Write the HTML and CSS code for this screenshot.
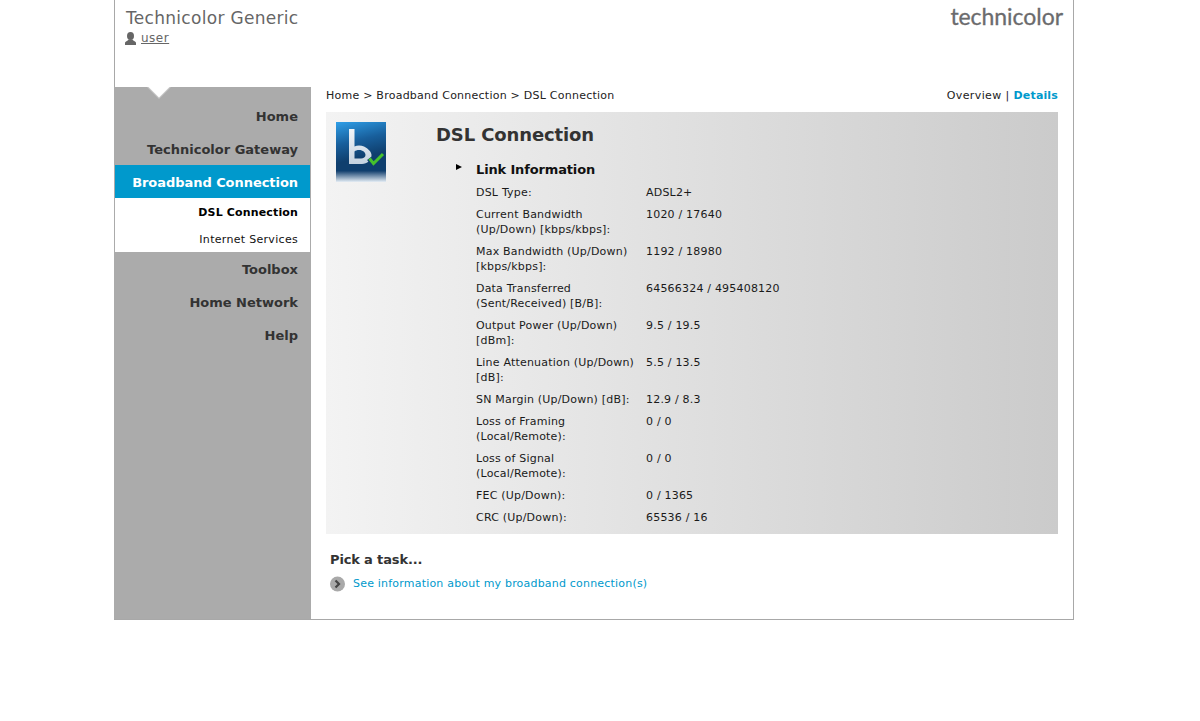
FILE: index.html
```html
<!DOCTYPE html>
<html lang="en">
<head>
<meta charset="utf-8">
<title>DSL Connection</title>
<link rel="stylesheet" href="styles.css">
</head>
<body>
<div class="page">
  <header class="header">
    <div class="identity">
      <div class="product">Technicolor Generic</div>
      <div class="user">
        <svg class="user-icon" width="11" height="13" viewBox="0 0 11 13"><ellipse cx="5.500" cy="4" rx="3.500" ry="4" fill="#666"/><path d="M0 13V10.800C0 9.500 2.500 8.800 3.800 7.500H7.200C8.500 8.800 11 9.500 11 10.800V13Z" fill="#666"/></svg>
        <a class="user-link" href="#">user</a>
      </div>
    </div>
    <div class="logo">technicolor</div>
  </header>
  <div class="main">
    <nav class="sidebar">
      <div class="notch">
        <svg width="24" height="12" viewBox="0 0 24 12"><path d="M0 0H24L12 12Z" fill="#c6c6c6"/><path d="M1.500 0H22.500L12 10.500Z" fill="#fff"/></svg>
      </div>
      <a class="nav-item" href="#">Home</a>
      <a class="nav-item" href="#">Technicolor Gateway</a>
      <a class="nav-item active" href="#">Broadband Connection</a>
      <div class="subnav">
        <a class="sub-item current" href="#">DSL Connection</a>
        <a class="sub-item" href="#">Internet Services</a>
      </div>
      <a class="nav-item" href="#">Toolbox</a>
      <a class="nav-item" href="#">Home Network</a>
      <a class="nav-item" href="#">Help</a>
    </nav>
    <main class="content">
      <div class="crumbs">
        <div>Home &gt; Broadband Connection &gt; DSL Connection</div>
        <div class="views">Overview | <a class="details" href="#">Details</a></div>
      </div>
      <section class="panel">
        <svg class="panel-icon" width="50" height="60" viewBox="0 0 50 60">
          <defs>
            <linearGradient id="bg" x1="0" y1="0" x2="0.25" y2="1">
              <stop offset="0" stop-color="#2f9fe8"/>
              <stop offset="0.45" stop-color="#185f9c"/>
              <stop offset="0.8" stop-color="#0f3f6e"/>
            </linearGradient>
            <linearGradient id="fade" x1="0" y1="0" x2="0" y2="1">
              <stop offset="0" stop-color="#14416f"/>
              <stop offset="1" stop-color="#e4edf5"/>
            </linearGradient>
            <linearGradient id="letter" x1="0" y1="0" x2="0" y2="1">
              <stop offset="0" stop-color="#f2f5f8"/>
              <stop offset="1" stop-color="#c4d2e0"/>
            </linearGradient>
          </defs>
          <rect width="50" height="49" fill="url(#bg)"/>
          <rect y="49" width="50" height="11" fill="url(#fade)"/>
          <path fill-rule="evenodd" d="M13 7H18.500V24.500C21 23 25 23 28 24.500C33 27 35.500 30.500 35.500 33C35.500 38 31 42 26 42H13ZM18.500 36.500H25C27.500 36.500 29.500 35 29.500 33C29.500 30.500 27 28 23 28C21 28 19.500 28.500 18.500 29.500Z" fill="url(#letter)"/>
          <path d="M33 36.500L37.500 42L47.500 32" fill="none" stroke="#0f3f6e" stroke-width="5"/>
          <path d="M33.500 36.500L37.500 41.500L47 32" fill="none" stroke="#46c22c" stroke-width="3"/>
        </svg>
        <div class="panel-body">
          <h1 class="title">DSL Connection</h1>
          <h2 class="subtitle">Link Information</h2>
          <dl class="info">
            <dt>DSL Type:</dt><dd>ADSL2+</dd>
            <dt>Current Bandwidth<br>(Up/Down) [kbps/kbps]:</dt><dd>1020 / 17640</dd>
            <dt>Max Bandwidth (Up/Down)<br>[kbps/kbps]:</dt><dd>1192 / 18980</dd>
            <dt>Data Transferred<br>(Sent/Received) [B/B]:</dt><dd>64566324 / 495408120</dd>
            <dt>Output Power (Up/Down)<br>[dBm]:</dt><dd>9.5 / 19.5</dd>
            <dt>Line Attenuation (Up/Down)<br>[dB]:</dt><dd>5.5 / 13.5</dd>
            <dt>SN Margin (Up/Down) [dB]:</dt><dd>12.9 / 8.3</dd>
            <dt>Loss of Framing<br>(Local/Remote):</dt><dd>0 / 0</dd>
            <dt>Loss of Signal<br>(Local/Remote):</dt><dd>0 / 0</dd>
            <dt>FEC (Up/Down):</dt><dd>0 / 1365</dd>
            <dt>CRC (Up/Down):</dt><dd>65536 / 16</dd>
          </dl>
        </div>
      </section>
      <div class="tasks">
        <div class="tasks-title">Pick a task...</div>
        <a class="task" href="#">
          <svg class="task-icon" width="15" height="16" viewBox="0 0 15 16"><circle cx="7.500" cy="8" r="7.500" fill="#a9a9a9"/><path d="M5.500 4.500L9 8L5.500 11.500" fill="none" stroke="#444" stroke-width="2.200"/></svg>
          <span>See information about my broadband connection(s)</span>
        </a>
      </div>
    </main>
  </div>
</div>
</body>
</html>
```
FILE: styles.css
```css
* { box-sizing: border-box; }
html, body { margin: 0; padding: 0; background: #fff; }
body { font-family: "DejaVu Sans", Verdana, sans-serif; font-size: 11px; letter-spacing: 0.2px; color: #222; }
a { text-decoration: none; color: inherit; }
.page {
  width: 960px;
  height: 620px;
  margin-left: 114px;
  border-right: 1px solid #a8a8a8;
  border-bottom: 1px solid #a8a8a8;
  display: flex;
  flex-direction: column;
}
.header {
  height: 87px;
  flex: none;
  border-left: 1px solid #a8a8a8;
  display: flex;
  justify-content: space-between;
  padding: 8px 10px 0 10px;
}
.product { font-size: 17px; line-height: 20px; letter-spacing: 0.3px; color: #666; margin-left: 1px; }
.user { display: flex; align-items: center; gap: 5px; margin-top: 2px; font-size: 12px; line-height: 16px; letter-spacing: 0.5px; color: #666; }
.user-link { text-decoration: underline; }
.logo { font-family: Lato, "Open Sans", sans-serif; font-size: 23px; line-height: 22px; letter-spacing: -0.05px; color: #6b6b6d; margin-top: -3px; -webkit-text-stroke: 0.3px #6b6b6d; }
.main { flex: 1; display: flex; min-height: 0; }
.sidebar {
  width: 197px;
  flex: none;
  background: #ababab;
  display: flex;
  flex-direction: column;
}
.notch { height: 12px; padding-left: 33px; display: flex; }
.nav-item {
  height: 33px;
  flex: none;
  display: flex;
  align-items: center;
  justify-content: flex-end;
  padding: 2px 12px 0 0;
  margin-left: 1px;
  margin-right: 1px;
  font-size: 13px;
  font-weight: bold;
  letter-spacing: 0;
  color: #333;
}
.nav-item.active { background: #0099cc; color: #fff; letter-spacing: -0.05px; }
.subnav { background: #fff; margin: 0 1px; flex: none; }
.sub-item {
  height: 27px;
  display: flex;
  align-items: center;
  justify-content: flex-end;
  padding: 2px 12px 0 0;
  letter-spacing: 0.3px;
  color: #111;
}
.sub-item.current { font-weight: bold; letter-spacing: 0.15px; color: #000; }
.content { flex: 1; min-width: 0; padding: 0 15px; }
.crumbs { height: 25px; display: flex; justify-content: space-between; align-items: flex-start; padding-top: 1px; line-height: 15px; letter-spacing: 0.24px; color: #222; }
.views { letter-spacing: 0.4px; }
.details { color: #0099cc; font-weight: bold; letter-spacing: 0.15px; }
.panel {
  height: 422px;
  background: linear-gradient(to right, #f3f3f3, #cbcbcb);
  padding: 10px 0 0 10px;
  display: flex;
}
.panel-icon { flex: none; display: block; }
.panel-body { margin-left: 51px; }
.title { margin: 1px 0 0 -1px; font-size: 18px; line-height: 24px; letter-spacing: -0.12px; color: #333; font-weight: bold; }
.subtitle {
  position: relative;
  margin: 15px 0 0 39px;
  font-size: 13px;
  line-height: 16px;
  letter-spacing: -0.15px;
  color: #111;
  font-weight: bold;
}
.subtitle::before {
  content: "";
  position: absolute;
  left: -20px;
  top: 2px;
  border-left: 6px solid #000;
  border-top: 3.5px solid transparent;
  border-bottom: 3.5px solid transparent;
}
.info {
  margin: 7px 0 0 39px;
  display: grid;
  grid-template-columns: 170px auto;
  row-gap: 7px;
  line-height: 15px;
  color: #1a1a1a;
}
.info dt, .info dd { margin: 0; }
.tasks { padding: 17px 0 0 4px; }
.tasks-title { font-size: 13px; line-height: 18px; letter-spacing: -0.15px; color: #333; font-weight: bold; }
.task { display: flex; align-items: center; gap: 8px; margin-top: 7px; color: #0099cc; line-height: 16px; }
```
